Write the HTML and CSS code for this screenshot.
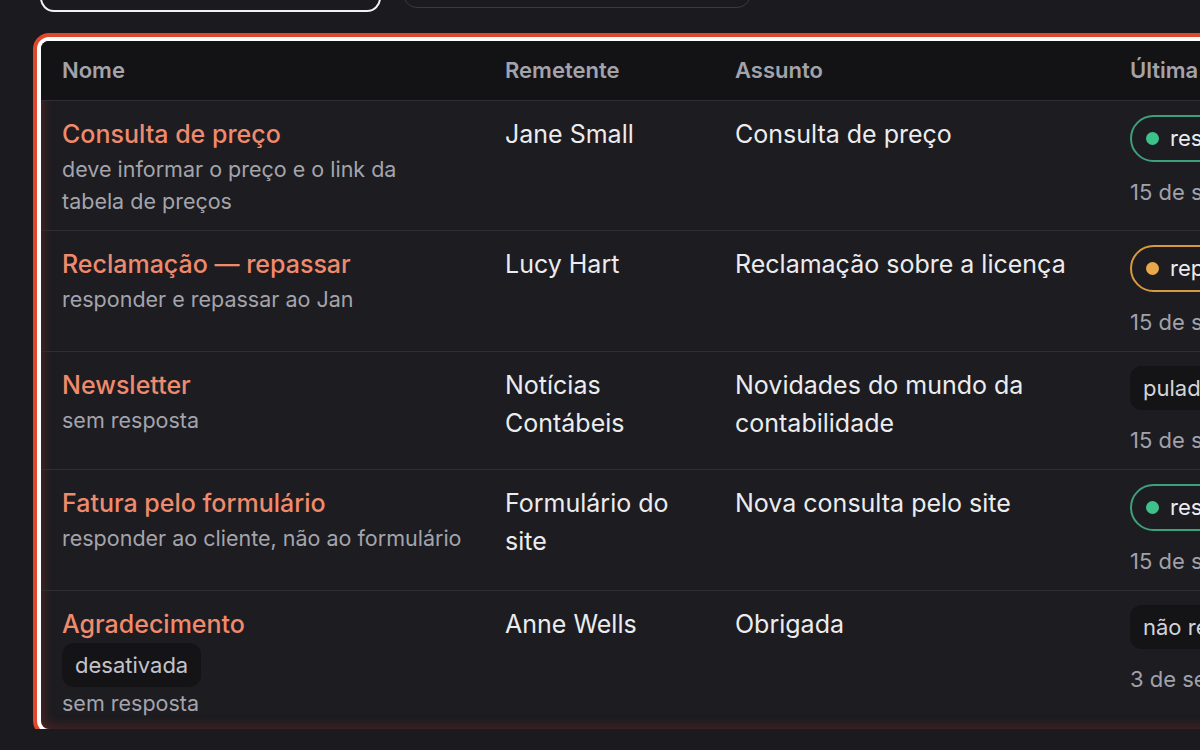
FILE: index.html
```html
<!DOCTYPE html>
<html lang="pt-BR">
<head>
<meta charset="utf-8">
<link rel="stylesheet" href="styles.css">
</head>
<body>
<div class="page">
  <div class="toolbar">
    <div class="tool tool-active"></div>
    <div class="tool tool-idle"></div>
  </div>
  <div class="frame">
    <table class="rules">
      <colgroup>
        <col class="c-name"><col class="c-from"><col class="c-subj"><col class="c-last">
      </colgroup>
      <thead>
        <tr><th>Nome</th><th>Remetente</th><th>Assunto</th><th>Última execução</th></tr>
      </thead>
      <tbody>
        <tr>
          <td><div class="name">Consulta de preço</div><div class="sub">deve informar o preço e o link da tabela de preços</div></td>
          <td class="main">Jane Small</td>
          <td class="main">Consulta de preço</td>
          <td><span class="pill pill-green"><span class="dot"></span>respondida</span><div class="date">15 de set. de 2024, 10:42</div></td>
        </tr>
        <tr>
          <td><div class="name">Reclamação — repassar</div><div class="sub">responder e repassar ao Jan</div></td>
          <td class="main">Lucy Hart</td>
          <td class="main">Reclamação sobre a licença</td>
          <td><span class="pill pill-amber"><span class="dot"></span>repassada</span><div class="date">15 de set. de 2024, 09:17</div></td>
        </tr>
        <tr>
          <td><div class="name">Newsletter</div><div class="sub">sem resposta</div></td>
          <td class="main">Notícias Contábeis</td>
          <td class="main">Novidades do mundo da contabilidade</td>
          <td><span class="tag">pulada</span><div class="date">15 de set. de 2024, 08:03</div></td>
        </tr>
        <tr>
          <td><div class="name">Fatura pelo formulário</div><div class="sub">responder ao cliente, não ao formulário</div></td>
          <td class="main">Formulário do site</td>
          <td class="main">Nova consulta pelo site</td>
          <td><span class="pill pill-green"><span class="dot"></span>respondida</span><div class="date">15 de set. de 2024, 07:55</div></td>
        </tr>
        <tr>
          <td><div class="name">Agradecimento</div><span class="tag tag-off">desativada</span><div class="sub">sem resposta</div></td>
          <td class="main">Anne Wells</td>
          <td class="main">Obrigada</td>
          <td><span class="tag">não respondida</span><div class="date">3 de set. de 2024, 16:20</div></td>
        </tr>
      </tbody>
    </table>
  </div>
</div>
</body>
</html>
```
FILE: styles.css
```css
html, body {
  margin: 0;
  padding: 0;
  background: #1b1b1f;
  overflow: hidden;
}
body {
  font-family: Inter, "Noto Sans", sans-serif;
  color: #ececee;
}
.page {
  width: 1500px;
  padding: 0 0 0 41px;
}
.toolbar {
  display: flex;
  align-items: flex-start;
  gap: 22px;
  margin-top: -40px;
  margin-left: -1px;
}
.tool {
  border-radius: 14px;
  box-sizing: border-box;
}
.tool-active {
  width: 341px;
  height: 52px;
  border: 2px solid #f2f2f2;
}
.tool-idle {
  width: 348px;
  height: 48px;
  border: 1px solid #3a3a40;
}
.frame {
  margin-top: 29px;
  width: 1400px;
  border-radius: 8px;
  background: #1c1c21;
  box-shadow: 0 0 0 4px #ffffff, 0 0 0 8px #e1482b, inset 0 0 14px rgba(214, 60, 40, 0.35);
  overflow: hidden;
}
.rules {
  width: 100%;
  border-collapse: collapse;
  table-layout: fixed;
}
.c-name { width: 443px; }
.c-from { width: 230px; }
.c-subj { width: 395px; }
.c-last { width: auto; }
thead th {
  background: #131316;
  color: #a3a3ab;
  font-size: 22px;
  font-weight: 600;
  text-align: left;
  height: 59px;
  padding: 0 22px 0 21px;
  border-bottom: 1px solid #2e2e33;
  box-sizing: border-box;
}
tbody td {
  vertical-align: top;
  padding: 14px 22px 13px 21px;
  border-bottom: 1px solid #2e2e33;
}
tbody tr:last-child td {
  border-bottom: none;
  padding-bottom: 10px;
}
.name {
  color: #f08a6c;
  font-size: 25px;
  font-weight: 500;
  line-height: 38px;
}
.sub {
  color: #a4a4ac;
  font-size: 21.5px;
  line-height: 32px;
}
.main {
  font-size: 25px;
  line-height: 38px;
  color: #ececee;
}
.date {
  color: #a1a1aa;
  font-size: 22px;
  line-height: 32px;
  margin-top: 14px;
  white-space: nowrap;
}
.pill {
  display: inline-flex;
  align-items: center;
  gap: 11px;
  height: 47px;
  box-sizing: border-box;
  padding: 0 18px 0 14px;
  border-radius: 24px;
  border: 2px solid;
  font-size: 22px;
  color: #ececee;
  white-space: nowrap;
  vertical-align: top;
}
.pill-green { border-color: #3f9f78; }
.pill-amber { border-color: #d79a3e; }
.dot {
  width: 13px;
  height: 13px;
  border-radius: 50%;
}
.pill-green .dot { background: #3ec28a; }
.pill-amber .dot { background: #e8a84c; }
.tag {
  display: inline-flex;
  align-items: center;
  height: 44px;
  box-sizing: border-box;
  padding: 0 13px;
  border-radius: 12px;
  background: #141417;
  color: #d4d4d8;
  font-size: 22px;
  white-space: nowrap;
  vertical-align: top;
}
.tag-off {
  color: #c4c4ca;
}
```
